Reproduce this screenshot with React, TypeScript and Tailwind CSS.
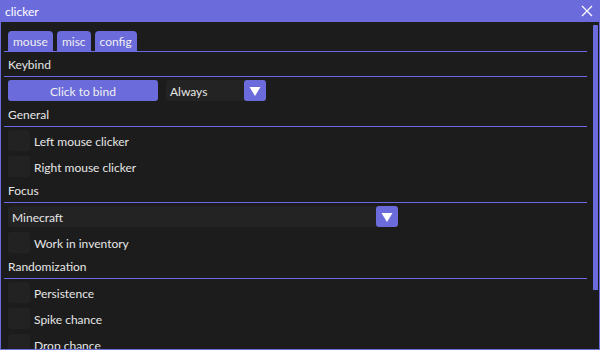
import React from "react";

function Label({ text, first }: { text: string; first?: boolean }) {
  return (
    <div className={`${first ? "h-[24px]" : "h-[25px]"} flex items-center pl-[4px] pt-[2px] text-[12px] text-[#e6e6e6]`}>
      {text}
    </div>
  );
}

function Sep() {
  return <div className="h-[1px] bg-[#6b6be6] mb-[3px]" />;
}

function Check({ text, last }: { text: string; last?: boolean }) {
  return (
    <div className={`flex items-center h-[21px] ml-[4px] ${last ? "" : "mb-[5px]"}`}>
      <div className="w-[22px] h-[21px] rounded-[3px] bg-[#222222] shrink-0" />
      <span className="ml-[4px] pt-[2px] text-[12px] text-[#e6e6e6] whitespace-nowrap">{text}</span>
    </div>
  );
}

function Arrow() {
  return (
    <div className="w-[22px] h-[21px] rounded-[3px] bg-[#6b6bdb] flex items-center justify-center">
      <svg width="12" height="10" viewBox="0 0 12 10">
        <polygon points="0.5,1 11.5,1 6,10" fill="#ffffff" />
      </svg>
    </div>
  );
}

export default function App() {
  return (
    <div className="w-[600px] h-[350px] flex flex-col bg-[#1c1c1c] overflow-hidden font-['Lato',sans-serif]">
      <div className="h-[22px] bg-[#6b6bdb] flex items-center justify-between pl-[5px] pr-[7px] shrink-0">
        <span className="text-[12px] text-white pt-[1px]">clicker</span>
        <svg width="12" height="12" viewBox="0 0 12 12">
          <path d="M1 1 L11 11 M11 1 L1 11" stroke="#ffffff" strokeWidth="1.3" />
        </svg>
      </div>
      <div className="flex-1 flex border-l border-r border-b border-[#6b6bdb] min-h-0">
        <div className="flex-1 pl-[3px] pt-[9px] overflow-hidden">
          <div className="flex gap-[4px] pl-[4px]">
            {["mouse", "misc", "config"].map((t) => (
              <div key={t} className="h-[20px] pl-[5px] pr-[5px] pt-[2px] rounded-t-[4px] bg-[#6b6bdb] text-[12px] text-[#f0f0f0] flex items-center">
                {t}
              </div>
            ))}
          </div>
          <div className="h-[1px] bg-[#6b6be6]" />
          <Label text="Keybind" first />
          <Sep />
          <div className="flex items-center ml-[4px]">
            <div className="w-[150px] h-[21px] pt-[2px] rounded-[3px] bg-[#6b6bdb] flex items-center justify-center text-[12px] text-[#f0f0f0]">
              Click to bind
            </div>
            <div className="ml-[8px] w-[100px] h-[21px] rounded-[3px] bg-[#232323] flex items-center justify-between">
              <span className="pl-[4px] pt-[2px] text-[12px] text-[#e6e6e6]">Always</span>
              <Arrow />
            </div>
          </div>
          <Label text="General" />
          <Sep />
          <Check text="Left mouse clicker" />
          <Check text="Right mouse clicker" last />
          <Label text="Focus" />
          <Sep />
          <div className="ml-[4px] w-[390px] h-[21px] rounded-[3px] bg-[#232323] flex items-center justify-between mb-[5px]">
            <span className="pl-[4px] pt-[2px] text-[12px] text-[#e6e6e6]">Minecraft</span>
            <Arrow />
          </div>
          <Check text="Work in inventory" last />
          <Label text="Randomization" />
          <Sep />
          <Check text="Persistence" />
          <Check text="Spike chance" />
          <Check text="Drop chance" />
        </div>
        <div className="w-[12px] shrink-0 pt-[3px] pl-[6px]">
          <div className="w-[5px] h-[265px] bg-[#6b6bdb] rounded-t-[1px]" />
        </div>
      </div>
    </div>
  );
}
